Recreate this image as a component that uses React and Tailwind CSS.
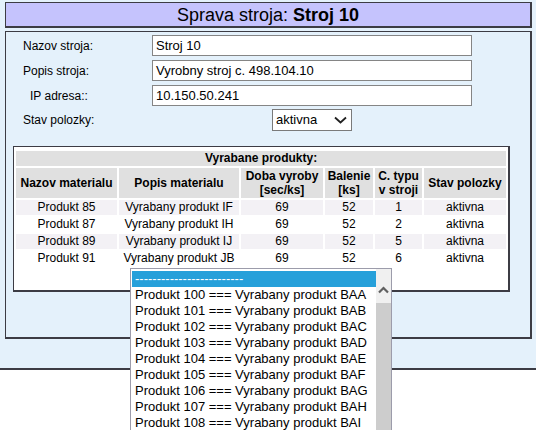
import React from "react";

const rows = [
  ["Produkt 85", "Vyrabany produkt IF", "69", "52", "1", "aktivna"],
  ["Produkt 87", "Vyrabany produkt IH", "69", "52", "2", "aktivna"],
  ["Produkt 89", "Vyrabany produkt IJ", "69", "52", "5", "aktivna"],
  ["Produkt 91", "Vyrabany produkt JB", "69", "52", "6", "aktivna"],
];

const options = [
  ["100", "BAA"],
  ["101", "BAB"],
  ["102", "BAC"],
  ["103", "BAD"],
  ["104", "BAE"],
  ["105", "BAF"],
  ["106", "BAG"],
  ["107", "BAH"],
  ["108", "BAI"],
];

function FormRow({ label, labelPad, children, h }) {
  return (
    <div className={`flex items-center ${h}`}>
      <div className={`w-[146px] shrink-0 text-[12px] text-black ${labelPad}`}>{label}</div>
      {children}
    </div>
  );
}

function TextBox({ value }) {
  return (
    <div className="w-[320px] h-[21px] border border-[#858585] bg-white px-[3px] flex items-center text-[13px] text-black whitespace-nowrap">
      {value}
    </div>
  );
}

export default function App() {
  return (
    <div className="relative w-full h-[430px] overflow-hidden bg-white font-['Liberation_Sans',Arial,sans-serif]">
      <div className="bg-[#e4f1fb] border-b-2 border-[#3c3c44] pt-[2px] pl-[5px] pr-[4px] pb-[29px]">
        <div className="h-[26px] bg-[#c5c3fd] border-t border-l border-r-2 border-b-2 border-[#3c3c44] flex items-center justify-center text-[18px] text-black leading-none">
          <span>
            Sprava stroja: <b>Stroj 10</b>
          </span>
        </div>

        <div className="mt-[3px] border-t border-l border-r-2 border-b-2 border-[#3c3c44] pt-[3px] pb-[45px]">
          <div className="flex flex-col">
            <FormRow label="Nazov stroja:" labelPad="pl-[17px]" h="h-[21px]">
              <TextBox value="Stroj 10" />
            </FormRow>
            <div className="h-[4px]" />
            <FormRow label="Popis stroja:" labelPad="pl-[17px]" h="h-[21px]">
              <TextBox value="Vyrobny stroj c. 498.104.10" />
            </FormRow>
            <div className="h-[4px]" />
            <FormRow label="IP adresa::" labelPad="pl-[24px]" h="h-[21px]">
              <TextBox value="10.150.50.241" />
            </FormRow>
            <div className="h-[3px]" />
            <FormRow label="Stav polozky:" labelPad="pl-[17px]" h="h-[22px]">
              <div className="w-[320px] flex justify-center">
                <div className="w-[80px] h-[22px] border border-[#7a7a7a] bg-white flex items-center justify-between pl-[3px] pr-[3px] text-[13px] text-black">
                  <span>aktivna</span>
                  <svg width="13" height="8" viewBox="0 0 13 8" className="mr-[1px]">
                    <path d="M1 1.5 L6.5 6.5 L12 1.5" fill="none" stroke="#202020" strokeWidth="1.8" />
                  </svg>
                </div>
              </div>
            </FormRow>
          </div>

          <div className="mt-[15px] ml-[7px] mr-[20px] bg-white border-t border-l border-r-2 border-b-2 border-[#3c3c44] pt-[2px] pb-[22px]">
            <table className="w-full table-fixed border-separate border-spacing-[2px] text-[12px] text-black">
              <colgroup>
                <col className="w-[101px]" />
                <col className="w-[120px]" />
                <col className="w-[82px]" />
                <col className="w-[48px]" />
                <col className="w-[47px]" />
                <col className="w-[82px]" />
              </colgroup>
              <tbody>
                <tr>
                  <td colSpan={6} className="h-[15px] p-0 bg-[#e0e0e0] text-center font-bold leading-[15px]">
                    Vyrabane produkty:
                  </td>
                </tr>
                <tr>
                  <td className="h-[30px] p-0 bg-[#e0e0e0] text-center font-bold leading-[14px]">Nazov materialu</td>
                  <td className="h-[30px] p-0 bg-[#e0e0e0] text-center font-bold leading-[14px]">Popis materialu</td>
                  <td className="h-[30px] p-0 bg-[#e0e0e0] text-center font-bold leading-[14px]">
                    Doba vyroby
                    <br />
                    [sec/ks]
                  </td>
                  <td className="h-[30px] p-0 bg-[#e0e0e0] text-center font-bold leading-[14px]">
                    Balenie
                    <br />
                    [ks]
                  </td>
                  <td className="h-[30px] p-0 bg-[#e0e0e0] text-center font-bold leading-[14px]">
                    C. typu
                    <br />v stroji
                  </td>
                  <td className="h-[30px] p-0 bg-[#e0e0e0] text-center font-bold leading-[14px]">Stav polozky</td>
                </tr>
                {rows.map((r, i) => (
                  <tr key={i} className={i % 2 === 0 ? "bg-[#f3f1f5]" : "bg-white"}>
                    {r.map((c, j) => (
                      <td key={j} className="h-[15px] p-0 text-center leading-[15px] whitespace-nowrap overflow-hidden">
                        {c}
                      </td>
                    ))}
                  </tr>
                ))}
              </tbody>
            </table>
          </div>
        </div>
      </div>

      <div className="absolute left-[130px] top-[268px] w-[262px] h-[175px] border border-[#9c9cab] bg-white flex overflow-hidden">
        <div className="flex-1 pt-[2px] pl-[1px] text-[13px] text-black leading-[16px]">
          <div className="h-[16px] bg-[#26a0da] text-white pl-[3px] whitespace-nowrap">
            -------------------------
          </div>
          {options.map(([n, s]) => (
            <div key={n} className="h-[16px] pl-[3px] whitespace-nowrap">
              Produkt {n} === Vyrabany produkt {s}
            </div>
          ))}
        </div>
        <div className="w-[15px] shrink-0 flex flex-col bg-[#f0f0f0]">
          <div className="h-[34px] flex items-start justify-center pt-[17px]">
            <svg width="11" height="8" viewBox="0 0 11 8">
              <path d="M1 6.5 L5.5 2 L10 6.5" fill="none" stroke="#606060" strokeWidth="2.2" />
            </svg>
          </div>
          <div className="flex-1 bg-[#cdcdcd]" />
        </div>
      </div>
    </div>
  );
}
